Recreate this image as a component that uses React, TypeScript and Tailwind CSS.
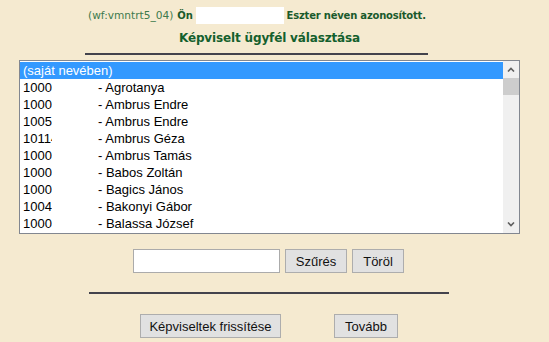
import React from 'react';

interface Client {
  code: string;
  name: string;
}

const CLIENTS: Client[] = [
  { code: '10001234', name: 'Agrotanya' },
  { code: '10002345', name: 'Ambrus Endre' },
  { code: '10053456', name: 'Ambrus Endre' },
  { code: '10114567', name: 'Ambrus Géza' },
  { code: '10007678', name: 'Ambrus Tamás' },
  { code: '10008789', name: 'Babos Zoltán' },
  { code: '10007890', name: 'Bagics János' },
  { code: '10047901', name: 'Bakonyi Gábor' },
  { code: '10007012', name: 'Balassa József' },
];

const verdana = { fontFamily: '"DejaVu Sans", Verdana, sans-serif' };
const tahoma = { fontFamily: '"Liberation Sans", Tahoma, Arial, sans-serif' };

function Btn({ label, w }: { label: string; w: string }) {
  return (
    <button
      className={`${w} h-[24px] border border-[#adadad] bg-[#e1e1e1] text-[13px] text-[#111] leading-none`}
      style={tahoma}
    >
      {label}
    </button>
  );
}

export default function App() {
  return (
    <div className="w-[549px] h-[342px] bg-[#f5ead0] overflow-hidden flex flex-col">

      {/* Identity line */}
      <div className="flex items-center h-[17px] mt-[7px] ml-[88px] text-[#1a5a2c]" style={verdana}>
        <span className="text-[10.6px] text-[#3d7a4d]">(wf:vmntrt5_04)</span>
        <span className="text-[10px] font-bold ml-[4px] tracking-[-0.2px]">Ön</span>
        <span className="w-[88px] h-[17px] bg-white ml-[3px]" />
        <span className="text-[10px] font-bold ml-[3px] tracking-[-0.2px]">Eszter néven azonosított.</span>
      </div>

      {/* Title */}
      <div className="mt-[6px] ml-[179px] h-[17px] leading-[17px] text-[12px] font-bold tracking-[-0.15px] text-[#14602d]" style={verdana}>
        Képviselt ügyfél választása
      </div>

      <div className="mt-[6px] ml-[85px] w-[343px] h-[2px] bg-[#43434c]" />

      {/* Listbox */}
      <div className="mt-[5px] ml-[19px] w-[501px] h-[174px] border border-[#828790] bg-white flex">
        <div className="w-[483px] pt-[1px] text-[13px] text-black" style={tahoma}>
          <div className="h-[17px] leading-[17px] pl-[3px] bg-[#3399ff] text-white">(saját nevében)</div>
          {CLIENTS.map((c, i) => (
            <div key={i} className="h-[17px] leading-[17px] pl-[3px] flex whitespace-nowrap">
              <span className="w-[75px] shrink-0">
                <span className="inline-block w-[29px] overflow-hidden align-top">{c.code}</span>
              </span>
              <span>- {c.name}</span>
            </div>
          ))}
        </div>
        <div className="w-[16px] bg-[#f0f0f0] flex flex-col">
          <div className="h-[17px] flex items-center justify-center">
            <svg width="8" height="5" viewBox="0 0 8 5">
              <path d="M1 4.5 L4 1.5 L7 4.5" stroke="#606060" strokeWidth="1.6" fill="none" />
            </svg>
          </div>
          <div className="h-[17px] bg-[#cdcdcd]" />
          <div className="flex-1" />
          <div className="h-[17px] flex items-center justify-center">
            <svg width="8" height="5" viewBox="0 0 8 5">
              <path d="M1 0.5 L4 3.5 L7 0.5" stroke="#606060" strokeWidth="1.6" fill="none" />
            </svg>
          </div>
        </div>
      </div>

      {/* Filter row */}
      <div className="mt-[15px] ml-[133px] flex gap-[5px]">
        <input className="w-[147px] h-[24px] border border-[#ababab] bg-white outline-none" />
        <Btn label="Szűrés" w="w-[62px]" />
        <Btn label="Töröl" w="w-[52px]" />
      </div>

      <div className="mt-[19px] ml-[89px] w-[360px] h-[2px] bg-[#43434c]" />

      {/* Actions */}
      <div className="mt-[20px] ml-[140px] flex gap-[53px]">
        <Btn label="Képviseltek frissítése" w="w-[141px]" />
        <Btn label="Tovább" w="w-[64px]" />
      </div>
    </div>
  );
}
